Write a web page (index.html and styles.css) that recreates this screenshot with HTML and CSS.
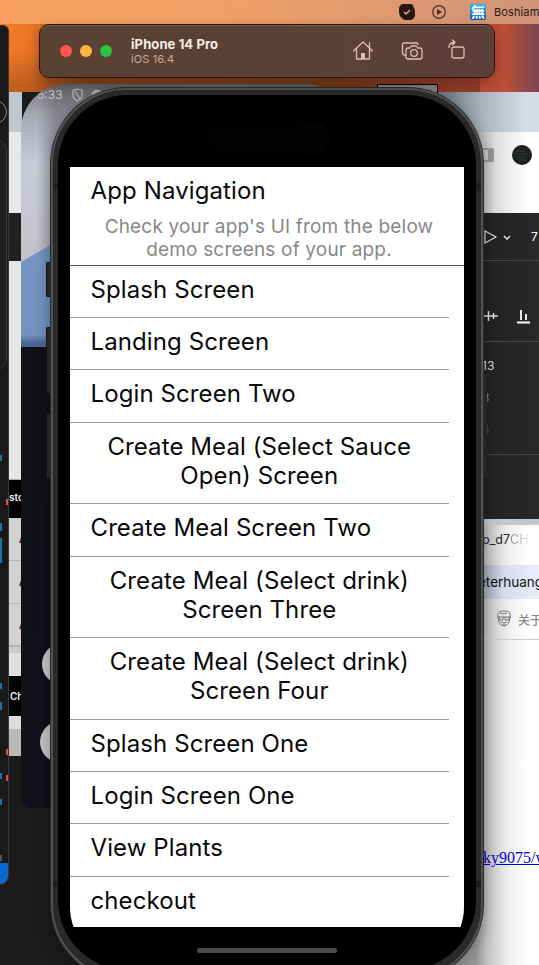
FILE: index.html
```html
<!DOCTYPE html>
<html lang="en">
<head>
<meta charset="utf-8">
<title>App Navigation</title>
<link rel="stylesheet" href="styles.css">
</head>
<body>
<div class="desktop">
  <div class="browser"><div class="tabs"></div>
    <svg class="browser-icons" viewBox="0 0 60 30"><rect x="1" y="9" width="13" height="12" rx="1" fill="none" stroke="#929292" stroke-width="2"/><path d="M9 9h5v12H9z" fill="#929292"/><circle cx="43" cy="15" r="10" fill="#1d1e1e"/><path d="M37 11h9M35 14h14M38 17h10M39 20h8" stroke="#3b4548" stroke-width=".8"/></svg>
  </div>
  <div class="figma">
    <div class="tool-row play-row"><svg width="30" height="16" viewBox="0 0 30 16"><path d="M1 2l11 6L1 14z" fill="none" stroke="#ddd" stroke-width="1.2"/><path d="M20 7l3 3 3-3" fill="none" stroke="#eee" stroke-width="1.4"/></svg><span>7</span></div>
    <div class="tool-row align-row"><svg width="48" height="16" viewBox="0 0 48 16"><path d="M0 8h14M4.500 3v10M9.500 5v6" stroke="#ddd" stroke-width="1.5"/><path d="M33 14.500h13M37 2v10M42 6v6" stroke="#fff" stroke-width="1.8"/></svg></div>
    <div class="values"><span>13</span><span class="dim">3</span><span class="dimmer">4</span></div>
  </div>
  <div class="page">
    <div class="page-tab">p_d7<span>CH</span></div>
    <div class="user">eterhuang</div>
    <div class="about"><svg width="16" height="18" viewBox="0 0 16 18"><path d="M2 7C1 2 4 1 8 1s7 1 6 6l-1 5c-2 5-8 5-10 0zM1 7h14M3 7v3h4V7M9 7v3h4V7M5 12l3 1 3-1M6 15h4M4 3l3 1 4-1" fill="none" stroke="#686868" stroke-width=".9"/></svg><span>关于</span></div>
    <div class="link">ky9075/w</div>
  </div>

  <div class="strip">
    <div class="s-head"></div><div class="s-light"></div><div class="s-dark"></div><div class="s-white"></div>
    <div class="s-label store">sto</div>
    <div class="s-row">A</div><div class="s-row">A</div><div class="s-row third">A</div>
    <div class="s-gap"></div><div class="s-label check">Ch</div><div class="s-gap2"></div><div class="s-gray"></div>
  </div>

  <div class="mirror">
    <div class="status"><span>5:33</span><svg width="34" height="14" viewBox="0 0 34 14"><path d="M5.500 1l4.500 1.500v5c0 3-4.500 5.500-4.500 5.500S1 10.500 1 7.500v-5zM3 3l5 8" fill="none" stroke="#b2b2b5" stroke-width="1.300"/><circle cx="25" cy="7" r="5.500" fill="#a9a9ad"/><path d="M22 7h6" stroke="#666" stroke-width="1.500"/></svg></div>
    <svg class="wallpaper" viewBox="0 0 40 110"><path d="M0 25L40 2V110H0z"/></svg>
    <i class="bubble b1"></i><i class="bubble b2"></i>
  </div>
  <div class="notch-box"></div>

  <div class="editor">
    <i class="ring"></i><i class="panel"></i>
    <i class="mark m1"></i><i class="mark m2"></i><i class="mark m3"></i><i class="mark m4"></i><i class="mark m5"></i><i class="mark m6"></i><i class="mark m7"></i><i class="mark m8"></i>
    <i class="red r1"></i><i class="red r2"></i><i class="red r3"></i>
    <i class="corner"></i>
  </div>

  <div class="side k1"></div><div class="side k2"></div><div class="side k3"></div><div class="side k4"></div>
  <div class="phone">
    <i class="seam left top"></i><i class="seam right top"></i><i class="seam left low"></i><i class="seam right low"></i>
    <div class="bezel">
      <div class="screen">
        <div class="island"><b></b></div>
        <main class="app">
          <header class="intro">
            <h1>App Navigation</h1>
            <p>Check your app's UI from the below<br>demo screens of your app.</p>
          </header>
          <ul class="list">
            <li>Splash Screen</li>
            <li>Landing Screen</li>
            <li>Login Screen Two</li>
            <li class="tall">Create Meal (Select Sauce<br>Open) Screen</li>
            <li>Create Meal Screen Two</li>
            <li class="tall">Create Meal (Select drink)<br>Screen Three</li>
            <li class="tall">Create Meal (Select drink)<br>Screen Four</li>
            <li>Splash Screen One</li>
            <li>Login Screen One</li>
            <li>View Plants</li>
            <li>checkout</li>
          </ul>
        </main>
        <div class="home-bar"></div>
      </div>
    </div>
  </div>

  <div class="menubar">
    <svg class="mb-check" width="16" height="16" viewBox="0 0 16 16"><path d="M5 0h6c3 0 3.500 2 3.500 3 1.500 2 1.500 4 1.500 7 0 4-2 6-6 6H8c-3 0-4-.5-5-2C0 12 0 9 0 5c0-3 2-5 5-5z" fill="#24180f"/><path d="M5 8l2 2 4-4" fill="none" stroke="#eba576" stroke-width="1.500"/></svg>
    <svg class="mb-play" width="14" height="14" viewBox="0 0 14 14"><circle cx="7" cy="7" r="6.300" fill="none" stroke="#49301f" stroke-width="1.200"/><path d="M5 4l5 3-5 3z" fill="#49301f"/></svg>
    <span class="ime">無</span><span class="mb-text">Boshiam</span>
  </div>

  <div class="simbar">
    <div class="lights"><i></i><i></i><i></i></div>
    <div class="title"><strong>iPhone 14 Pro</strong><span>iOS 16.4</span></div>
    <svg class="actions" width="116" height="24" viewBox="0 0 116 24" fill="none" stroke="#dfbeae" stroke-width="1.300" stroke-linejoin="round" stroke-linecap="round"><path d="M.5 12L10 3l9.500 9M3.500 10v10h13V10M16.500 4v5"/><path d="M8 14h4v6H8z" fill="#dfbeae" stroke="none"/><path d="M52 16h-1q-1.500 0-1.500-1.500v-9Q49.500 4 51 4h12.500Q65 4 65 5.500M55 9h2l1.300-2h5l1.300 2H67q2 0 2 2v7q0 2-2 2H55q-2 0-2-2v-7q0-2 2-2z"/><circle cx="61" cy="14" r="3.300"/><path d="M101 8h8q2 0 2 2v7q0 2-2 2h-8q-2 0-2-2v-7q0-2 2-2zM96 8.500q0-5 5-5M99.500 1L102 3.500 99.500 6"/></svg>
  </div>
</div>
</body>
</html>
```

FILE: styles.css
```css
* { box-sizing: border-box; }
body { margin: 0; font-family: Inter, "Noto Sans CJK SC", sans-serif; }
.desktop { position: relative; width: 539px; height: 965px; overflow: hidden; background: linear-gradient(#0000 50px, #0003 85px) 0 0 / 480px 92px no-repeat, linear-gradient(90deg, #f67b24 0, #ec7426 30px, #a8511f 75px, #93481e 330px, #b74930 455px, #bd4e38 505px, #7a4554 539px) 0 0 / 100% 92px no-repeat, #1b1b1b; }
.menubar { position: absolute; inset: 0 0 auto; height: 24px; background: linear-gradient(90deg, #f8a15e, #ef9f67 45%, #cf947a); }
.menubar > * { position: absolute; }
.mb-check { left: 399px; top: 4px; }
.mb-play { left: 432px; top: 5px; }
.ime { left: 470px; top: 4px; width: 16px; height: 16px; border-radius: 2px; background: linear-gradient(#35b7e4, #0757b4); color: #fff; font: 700 14px/15px "Noto Sans CJK TC", sans-serif; text-align: center; }
.mb-text { left: 494px; top: 4px; font-size: 11px; line-height: 16px; letter-spacing: .12px; color: #2b1b13; white-space: nowrap; }

.simbar { position: absolute; left: 39px; top: 24px; width: 456px; height: 54px; border: 1px solid #261309; border-radius: 10px; background: linear-gradient(90deg, #5b4132, #5b4136 70%, #5b3e38); box-shadow: inset 0 1px #7b6255, 0 5px 14px #0004; display: flex; align-items: center; padding-left: 20px; }
.lights { display: flex; gap: 8px; }
.lights i { width: 12px; height: 12px; border-radius: 50%; background: #ff5450; }
.lights i:nth-child(2) { background: #ffb43e; }
.lights i:nth-child(3) { background: #29c445; }
.title { margin-left: 19px; display: flex; flex-direction: column; width: 222px; }
.title strong { font-size: 13px; line-height: 15px; letter-spacing: .1px; color: #f7eee9; }
.title span { font-size: 11px; line-height: 14px; letter-spacing: .1px; color: #c7aa9c; }

.browser { position: absolute; left: 400px; top: 92px; width: 139px; height: 121px; background: linear-gradient(90deg, #999 70px, #ddd 95px, #fff 128px); }
.tabs { height: 40px; background: linear-gradient(90deg, #727b82 45px, #aab3bc 82px, #d5dce5 125px); }
.browser-icons { position: absolute; left: 79px; top: 48px; width: 60px; height: 30px; }
.figma { position: absolute; left: 470px; top: 213px; width: 69px; height: 307px; background: linear-gradient(90deg, #202020, #292929); color: #ddd; font-size: 12px; }
.tool-row { border-bottom: 1px solid #454545; display: flex; align-items: center; }
.play-row { height: 48px; padding-left: 14px; gap: 17px; }
.play-row span { color: #fff; font-size: 12px; }
.align-row { height: 81px; padding: 30px 0 0 14px; }
.values { height: 113px; display: flex; flex-direction: column; padding: 16px 0 0 12px; line-height: 16px; gap: 16px; border-bottom: 1px solid #444; }
.dim { color: #888; }
.dimmer { color: #4c4c4c; }
.page { position: absolute; left: 430px; top: 519px; width: 109px; height: 446px; padding-left: 40px; background: linear-gradient(90deg, #999 46px, #c4c4c4 58px, #eee 78px, #fff 98px); overflow: hidden; white-space: nowrap; border-top: 6px solid #c0c9d1; }
.page-tab { height: 40px; padding-left: 12px; font-size: 12.500px; line-height: 29px; color: #252525; }
.page-tab span { background: linear-gradient(90deg, #888, #eee); background-clip: text; color: transparent; }
.user { height: 34px; padding-left: 8px; background: linear-gradient(90deg, #999eac 12px, #d8dceb 35px, #e7ebf8 62px); font-size: 13.500px; line-height: 34px; color: #111; }
.about { height: 41px; border-bottom: 1px solid #ccc; display: flex; align-items: center; gap: 6px; padding-left: 26px; font-size: 12px; color: #888; font-weight: 500; }
.about svg { flex: none; }
.link { margin-top: 209px; padding-left: 13px; color: #00c; font: 16px/18px "Liberation Serif", serif; text-decoration: underline; }

.strip { position: absolute; left: 9px; top: 92px; width: 13px; font-size: 10px; font-weight: 600; color: #eee; white-space: nowrap; }
.strip > * { overflow: hidden; }
.s-head { height: 40px; background: #bfc6ce; }
.s-light { height: 81px; background: #e8e8e8; }
.s-dark { height: 48px; background: #212121; }
.s-white { height: 219px; background: #e6e6e6; border-bottom: 1px solid #aaa; }
.s-label { background: #000; line-height: 35px; height: 38px; }
.s-row { height: 43px; background: #d2d2d2; border-bottom: 1px solid #b5b5b5; color: #111; padding-left: 10px; line-height: 42px; }
.s-row.third { border-bottom-width: 2px; }
.s-gap { height: 29px; background: #e0e0e0; border-top: 6px solid #ccc; }
.check { height: 40px; line-height: 40px; padding-left: 1px; }
.s-gap2 { height: 13px; background: #ddd; }
.s-gray { height: 27px; background: #b9b9b9; }

.mirror { position: absolute; left: 21px; top: 84px; width: 330px; height: 724px; border-radius: 46px 46px 0 10px; overflow: hidden; background: linear-gradient(90deg, transparent 16px, #0003 34px), linear-gradient(#77787d 0, #a7a8b5 30px, #c8cad8 80px, #c3c4ce 155px, #b8bac6 256px, #101018 263px, #10111b 100%); }
.wallpaper { position: absolute; left: 0; top: 153px; width: 40px; height: 110px; background: linear-gradient(transparent 98px, #10111b 106px); }
.wallpaper path { fill: #5c84bd; opacity: .75; }
.status { display: flex; align-items: center; gap: 9px; padding: 4px 0 0 16px; font-size: 12px; line-height: 14px; color: #c4c4c6; }
.bubble { position: absolute; left: 21px; width: 42px; height: 42px; border-radius: 50%; background: #c4c4c4; }
.b1 { top: 559px; }
.b2 { top: 637px; left: 19px; }
.notch-box { position: absolute; left: 377px; top: 84px; width: 61px; height: 14px; border: 1px solid #000; background: #8b8384; }

.editor { position: absolute; left: -10px; top: 25px; width: 19px; height: 860px; border: 1px solid #3a3a3a; border-radius: 0 6px 9px 0; background: #191919; overflow: hidden; }
.editor i { position: absolute; }
.ring { right: 1px; top: 74px; width: 24px; height: 24px; border: 1px solid #898989; border-radius: 50%; }
.panel { right: 1px; top: 113px; width: 24px; height: 231px; border: 1px solid #393939; border-radius: 11px; background: #1e1e1e; }
.mark { left: 9px; width: 2px; height: 6px; background: #1777a2; }
.m1 { top: 429px; } .m2 { top: 497px; height: 8px; } .m3 { top: 512px; height: 25px; } .m4 { top: 657px; } .m5 { top: 676px; height: 8px; } .m6 { top: 747px; } .m7 { top: 773px; } .m8 { top: 829px; background: #555; }
.red { right: -1px; width: 3px; height: 6px; background: #f24848; }
.r1 { top: 473px; } .r2 { top: 723px; } .r3 { top: 749px; }
.corner { inset: auto 0 0; height: 21px; background: #0868cd; }

.side { position: absolute; left: 46px; width: 8px; background: #2a2a2a; border: 1px solid #141414; border-right: 0; border-radius: 2px 0 0 2px; }
.k1 { top: 262px; height: 35px; } .k2 { top: 327px; height: 67px; } .k3 { top: 413px; height: 66px; } .k4 { left: 481px; width: 6px; top: 372px; height: 108px; }
.phone { position: absolute; left: 51px; top: 88px; width: 432px; height: 892px; padding: 5px 5px 8px; border: 1.500px solid #555; border-width: 2px; border-color: #505152; border-radius: 76px; background: #292929; box-shadow: 0 0 0 1px #2a2a2a, 0 4px 16px #0005; }
.seam { position: absolute; width: 5px; height: 6px; background: #1d1d1d; }
.seam.left { left: 0; } .seam.right { right: 0; } .seam.top { top: 93px; } .seam.low { top: 791px; }
.bezel { height: 100%; padding: 4px 12px 7px; border-radius: 70px; background: #000; }
.screen { position: relative; width: 394px; height: 866px; border-radius: 58px; overflow: hidden; }
.island { width: 126px; height: 34px; border-radius: 17px; background: #020202; margin: 22px auto 12px; display: flex; justify-content: flex-end; }
.island b { width: 34px; border-radius: 50%; background: #040404; }
.app { height: 760px; background: #fff; overflow: hidden; color: #090909; }
.intro { height: 98.500px; padding: 9px 20.500px 0; border-bottom: 1px solid #555; }
h1 { margin: 0; font-size: 24px; line-height: 29px; letter-spacing: .12px; font-weight: 400; }
.intro p { margin: 10px 0 0; padding-left: 4px; text-align: center; color: #888; font-size: 19px; line-height: 23px; letter-spacing: .18px; white-space: nowrap; }
.list { margin: 0; padding: 0; list-style: none; width: 379px; font-size: 24px; line-height: 29px; letter-spacing: .1px; }
.list li { height: 52.400px; padding: 9px 20.500px 0; border-bottom: 1px solid #999; white-space: nowrap; }
.list .tall { height: 81.500px; padding-right: 21px; text-align: center; }
.home-bar { width: 140px; height: 5px; border-radius: 3px; background: #4b4b4b; margin: 21px auto 0; }
```
